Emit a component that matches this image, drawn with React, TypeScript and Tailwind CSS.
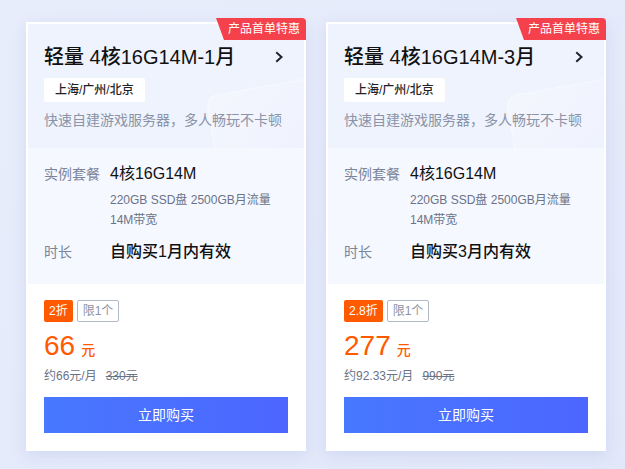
import React from "react";

type Plan = {
  title: string;
  months: number;
  discount: string;
  price: string;
  perMonth: string;
  original: string;
};

const plans: Plan[] = [
  { title: "轻量 4核16G14M-1月", months: 1, discount: "2折", price: "66", perMonth: "约66元/月", original: "330元" },
  { title: "轻量 4核16G14M-3月", months: 3, discount: "2.8折", price: "277", perMonth: "约92.33元/月", original: "990元" },
];

function Chevron() {
  return (
    <svg width="10" height="12" viewBox="0 0 10 12" fill="none" stroke="#1f2329" strokeWidth="2" strokeLinecap="square">
      <path d="M3 2l4.5 4L3 10" />
    </svg>
  );
}

function PlanCard({ plan }: { plan: Plan }) {
  return (
    <div className="relative w-[280px] bg-white px-[2px] pt-[2px] shadow-[0_4px_14px_rgba(120,140,200,0.18)]">
      {/* corner badge */}
      <div className="absolute right-0 top-[-4px] z-10 flex h-[22px] w-[90px] items-center justify-center rounded-tr-[4px] bg-[#f5414b] pl-[6px] text-[12px] text-white [clip-path:polygon(0_0,100%_0,100%_100%,8px_100%)]">
        产品首单特惠
      </div>

      {/* header */}
      <div className="relative overflow-hidden bg-[#eff3fe] px-4 pb-[18px] pt-[19px]">
        <div className="pointer-events-none absolute right-[-20px] top-[62px] h-[110px] w-[110px] rotate-[-10deg] rounded-[12px] border border-white/50 bg-gradient-to-br from-white/30 to-[#e6ecfd]/30" />
        <div className="relative flex items-center justify-between pr-[4px]">
          <h2 className="text-[20px] font-medium leading-[28px] text-[#111]">{plan.title}</h2>
          <Chevron />
        </div>
        <div className="relative mt-[7px] inline-flex h-6 items-center rounded-[2px] bg-white px-[11px] text-[12px] font-medium text-[#1f2329]">
          上海/广州/北京
        </div>
        <p className="relative mt-2 text-[14px] leading-5 text-[#8a93a7]">快速自建游戏服务器，多人畅玩不卡顿</p>
      </div>

      {/* details */}
      <div className="grid grid-cols-[66px_1fr] bg-[#f5f8ff] px-4 pb-[21px] pt-[15px]">
        <div className="text-[14px] leading-[22px] text-[#7c859a]">实例套餐</div>
        <div>
          <div className="text-[16px] leading-[22px] text-[#111]">4核16G14M</div>
          <div className="mt-[5px] text-[12px] leading-5 text-[#6b7386]">
            <div>220GB SSD盘 2500GB月流量</div>
            <div>14M带宽</div>
          </div>
        </div>
        <div className="mt-[11px] text-[14px] leading-[22px] text-[#7c859a]">时长</div>
        <div className="mt-[11px] text-[16px] font-medium leading-[22px] text-[#111]">自购买{plan.months}月内有效</div>
      </div>

      {/* price */}
      <div className="px-4 pb-[18px] pt-4">
        <div className="flex gap-[4px]">
          <span className="flex h-[22px] items-center rounded-[2px] bg-[#ff5a00] px-[5px] text-[12px] text-white">{plan.discount}</span>
          <span className="flex h-[22px] items-center rounded-[2px] border border-[#b4bbc8] px-[5px] text-[12px] text-[#8b93a5]">限1个</span>
        </div>
        <div className="mt-[10px] flex items-baseline gap-[6px] text-[#ff5a00]">
          <span className="text-[28px] leading-[28px]">{plan.price}</span>
          <span className="text-[14px] font-medium">元</span>
        </div>
        <div className="mt-[6px] flex gap-[9px] text-[12px] leading-[18px] text-[#6b7386]">
          <span>{plan.perMonth}</span>
          <span className="line-through">{plan.original}</span>
        </div>
        <button className="mt-3 flex h-9 w-full items-center justify-center bg-gradient-to-r from-[#4878ff] to-[#4c66ff] text-[14px] text-white">
          立即购买
        </button>
      </div>
    </div>
  );
}

export default function App() {
  return (
    <div
      className="flex h-[469px] w-[625px] items-start gap-5 bg-gradient-to-br from-[#e8edfb] to-[#e2e8fa] pl-[26px] pt-[22px]"
      style={{ fontFamily: '"Liberation Sans", "Noto Sans CJK SC", sans-serif' }}
    >
      {plans.map((p) => (
        <PlanCard key={p.title} plan={p} />
      ))}
    </div>
  );
}
